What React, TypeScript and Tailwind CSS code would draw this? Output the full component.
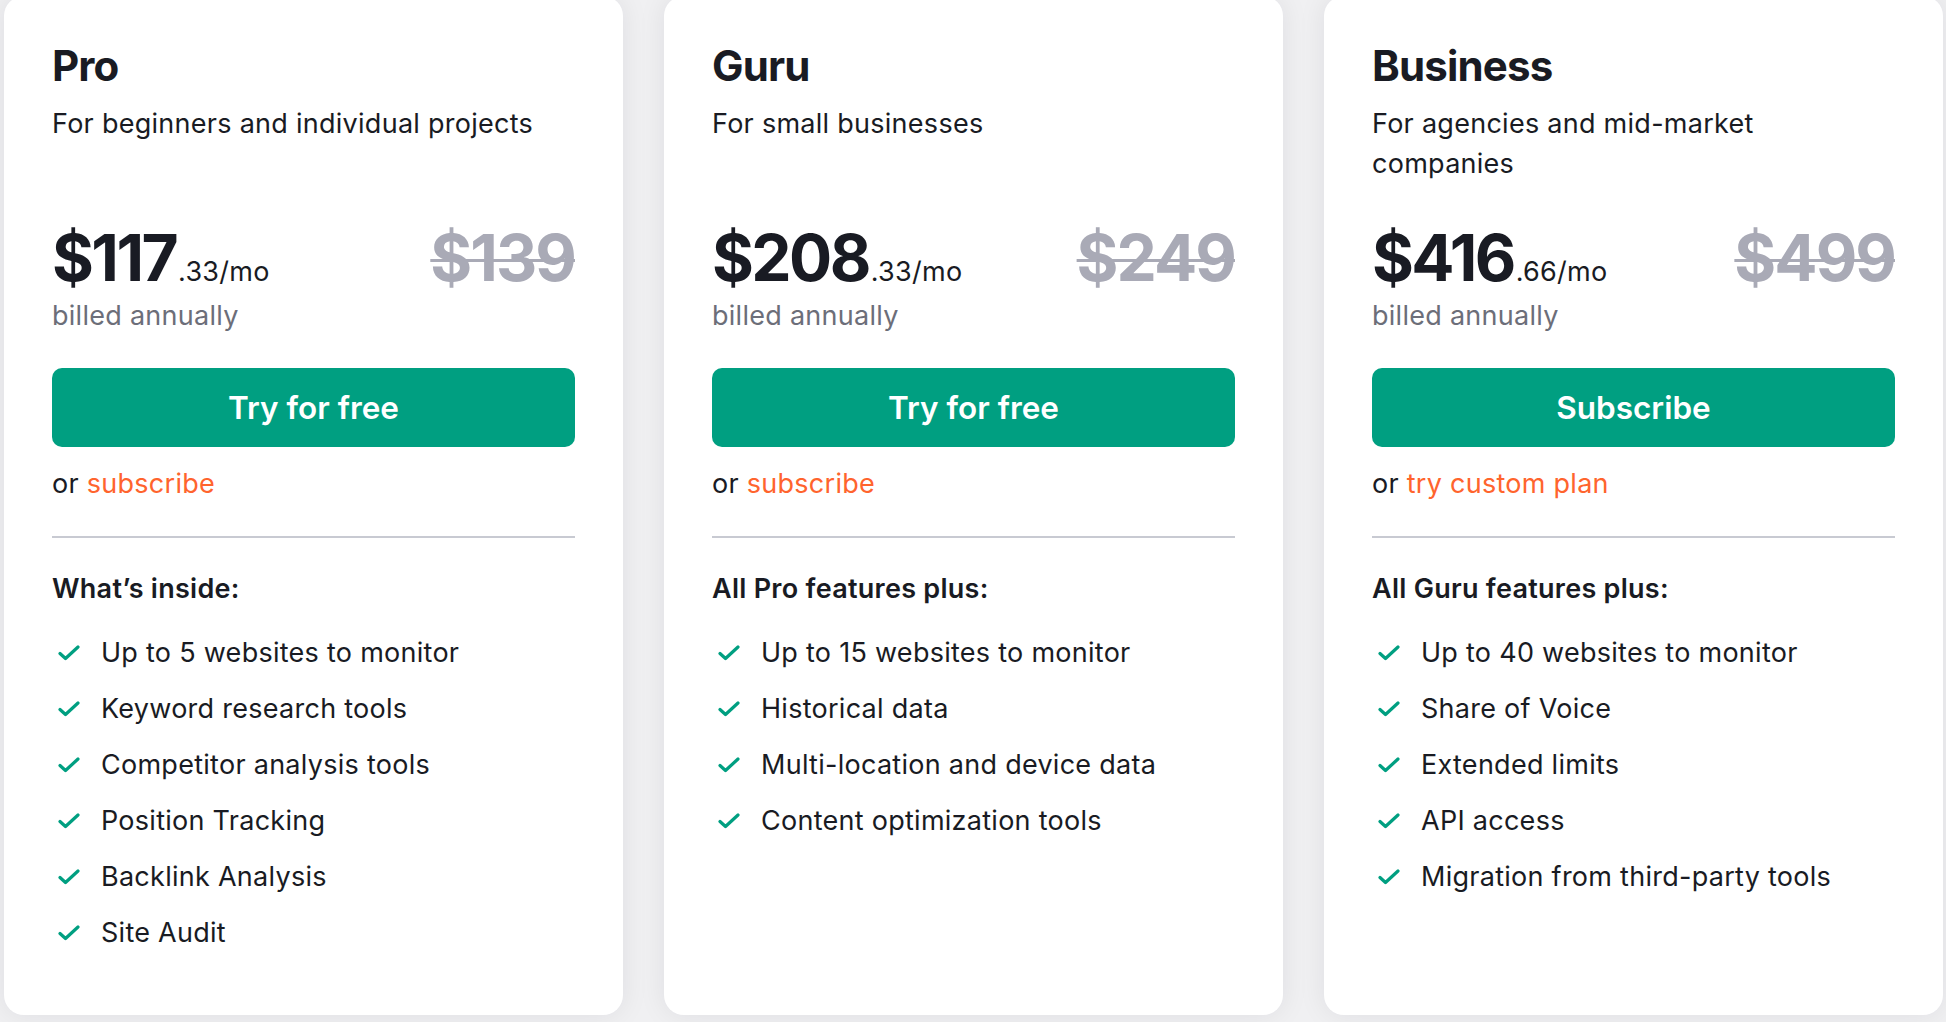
import React from "react";

type Plan = {
  name: string;
  tagline: string;
  price: string;
  cents: string;
  oldPrice: string;
  cta: string;
  altText: string;
  featuresTitle: string;
  features: string[];
};

const plans: Plan[] = [
  {
    name: "Pro",
    tagline: "For beginners and individual projects",
    price: "$117",
    cents: ".33/mo",
    oldPrice: "$139",
    cta: "Try for free",
    altText: "subscribe",
    featuresTitle: "What’s inside:",
    features: [
      "Up to 5 websites to monitor",
      "Keyword research tools",
      "Competitor analysis tools",
      "Position Tracking",
      "Backlink Analysis",
      "Site Audit",
    ],
  },
  {
    name: "Guru",
    tagline: "For small businesses",
    price: "$208",
    cents: ".33/mo",
    oldPrice: "$249",
    cta: "Try for free",
    altText: "subscribe",
    featuresTitle: "All Pro features plus:",
    features: [
      "Up to 15 websites to monitor",
      "Historical data",
      "Multi-location and device data",
      "Content optimization tools",
    ],
  },
  {
    name: "Business",
    tagline: "For agencies and mid-market companies",
    price: "$416",
    cents: ".66/mo",
    oldPrice: "$499",
    cta: "Subscribe",
    altText: "try custom plan",
    featuresTitle: "All Guru features plus:",
    features: [
      "Up to 40 websites to monitor",
      "Share of Voice",
      "Extended limits",
      "API access",
      "Migration from third-party tools",
    ],
  },
];

function Check() {
  return (
    <svg width="22" height="16" viewBox="0 0 22 16" fill="none" className="ml-[6px] mr-[21px] shrink-0">
      <path d="M2 8.5l5.5 5L20 2" stroke="#009f81" strokeWidth="3.2" strokeLinecap="round" strokeLinejoin="round" />
    </svg>
  );
}

function PlanCard({ plan }: { plan: Plan }) {
  return (
    <div className="w-[619px] h-[1019px] bg-white rounded-[20px] shadow-[0_0_28px_rgba(20,22,40,0.08)] px-[48px] pt-[44px] flex flex-col text-[#191b23] text-[27px] leading-[40px] tracking-[0.01em]">
      <div className="h-[186px]">
        <h2 className="text-[42px] leading-[52px] font-bold tracking-[-0.02em]">{plan.name}</h2>
        <p className="mt-[12px]">{plan.tagline}</p>
      </div>

      <div className="flex items-baseline justify-between h-[64px]">
        <div className="flex items-baseline">
          <span className="text-[64px] leading-[64px] font-bold tracking-[-0.04em]">{plan.price}</span>
          <span className="text-[27px] leading-[40px] ml-[2px] tracking-[0.01em]">{plan.cents}</span>
        </div>
        <span className="text-[64px] leading-[64px] font-bold tracking-[-0.03em] text-[#a9aab6] line-through decoration-[3px]">
          {plan.oldPrice}
        </span>
      </div>
      <p className="mt-[6px] text-[#6c6e79]">billed annually</p>

      <button className="mt-[32px] h-[79px] w-full rounded-[10px] bg-[#009f81] text-white text-[31.5px] font-semibold tracking-normal">
        {plan.cta}
      </button>
      <p className="mt-[17px]">
        or <span className="text-[#ff642d]">{plan.altText}</span>
      </p>

      <div className="mt-[32px] h-[2px] bg-[#c8cad2]" />

      <p className="mt-[31px] font-semibold">{plan.featuresTitle}</p>
      <ul className="mt-[24px] flex flex-col gap-[16px]">
        {plan.features.map((f) => (
          <li key={f} className="flex items-center">
            <Check />
            {f}
          </li>
        ))}
      </ul>
    </div>
  );
}

export default function App() {
  return (
    <main className="w-[1946px] h-[1022px] overflow-hidden bg-[#f0f0f2]" style={{ fontFamily: "Inter, 'Noto Sans', sans-serif" }}>
      <div className="flex gap-[41px] pl-[4px] mt-[-4px]">
        {plans.map((p) => (
          <PlanCard key={p.name} plan={p} />
        ))}
      </div>
    </main>
  );
}
